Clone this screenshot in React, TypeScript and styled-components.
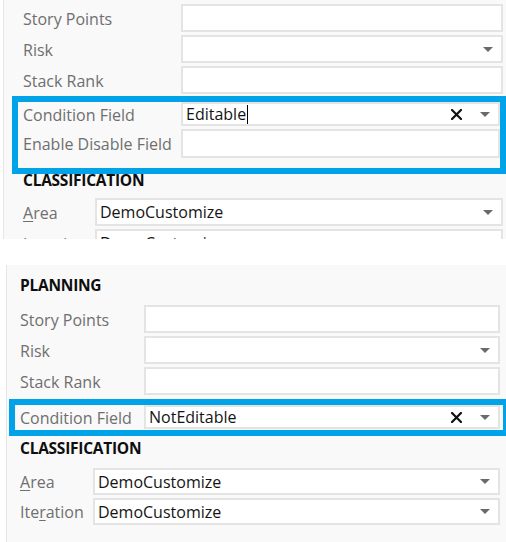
import React from "react";
import styled, { createGlobalStyle } from "styled-components";

const GlobalStyle = createGlobalStyle`
  html, body { margin: 0; padding: 0; background: #ffffff; }
  body { font-family: "Open Sans", "Noto Sans", sans-serif; }
  * { box-sizing: border-box; }
`;

const Page = styled.div`
  width: 506px;
  height: 542px;
  overflow: hidden;
  display: flex;
  flex-direction: column;
  gap: 26px;
`;

const Panel = styled.section<{
  $height: number;
  $offset: number;
  $padLeft: number;
  $padRight: number;
  $padTop: number;
}>`
  flex: none;
  height: ${(p) => p.$height}px;
  margin-left: ${(p) => p.$offset}px;
  border-left: 1px solid #e6e6e6;
  background: #f9f9f9;
  padding: ${(p) => p.$padTop}px ${(p) => p.$padRight}px 0 ${(p) => p.$padLeft}px;
  overflow: hidden;
  display: flex;
  flex-direction: column;
`;

const Group = styled.div`
  display: flex;
  flex-direction: column;
  gap: 3px;
  flex: none;
`;

const Row = styled.div<{ $labelWidth: number; $height: number }>`
  display: grid;
  grid-template-columns: ${(p) => p.$labelWidth}px 1fr;
  align-items: center;
  height: ${(p) => p.$height}px;
`;

const Label = styled.div`
  font-size: 16px;
  line-height: 20px;
  color: #6f6f6f;
  white-space: nowrap;
  padding-top: 1px;
`;

const Key = styled.span`
  text-decoration: underline;
  text-underline-offset: 2px;
  text-decoration-thickness: 1px;
`;

const Field = styled.div`
  height: 100%;
  min-width: 0;
  background: #ffffff;
  border: 2px solid #e4e4e4;
  display: flex;
  align-items: center;
  padding: 0 8px 0 3px;
`;

const Value = styled.div`
  flex: 1;
  display: flex;
  align-items: center;
  font-size: 16px;
  line-height: 20px;
  color: #141414;
  white-space: nowrap;
`;

const Caret = styled.span`
  display: inline-block;
  width: 1px;
  height: 19px;
  background: #000000;
  margin-left: 1px;
`;

const Icons = styled.div`
  display: flex;
  align-items: center;
  gap: 18px;
`;

const Highlight = styled.div<{
  $margin: string;
  $padding: string;
}>`
  flex: none;
  border: 6px solid #00a2e8;
  margin: ${(p) => p.$margin};
  padding: ${(p) => p.$padding};
  display: flex;
  flex-direction: column;
  gap: 3px;
`;

const Title = styled.div<{ $mt: number; $mb: number }>`
  flex: none;
  font-size: 15.5px;
  font-weight: 700;
  line-height: 20px;
  color: #0e0e0e;
  letter-spacing: -0.25px;
  margin: ${(p) => p.$mt}px 0 ${(p) => p.$mb}px 0;
`;

const ArrowIcon = () => (
  <svg width="10" height="5" viewBox="0 0 10 5" aria-hidden="true">
    <polygon points="0,0 10,0 5,5" fill="#6a6a6a" />
  </svg>
);

const ClearIcon = () => (
  <svg width="11" height="11" viewBox="0 0 11 11" aria-hidden="true">
    <path d="M1 1 L10 10 M10 1 L1 10" stroke="#111111" strokeWidth="2.2" strokeLinecap="square" />
  </svg>
);

type FieldProps = {
  label: React.ReactNode;
  labelWidth: number;
  height: number;
  value?: React.ReactNode;
  dropdown?: boolean;
  clear?: boolean;
};

const FormField = ({ label, labelWidth, height, value, dropdown, clear }: FieldProps) => (
  <Row $labelWidth={labelWidth} $height={height}>
    <Label>{label}</Label>
    <Field>
      <Value>{value}</Value>
      {(dropdown || clear) && (
        <Icons>
          {clear && <ClearIcon />}
          {dropdown && <ArrowIcon />}
        </Icons>
      )}
    </Field>
  </Row>
);

const AreaLabel = () => (
  <>
    <Key>A</Key>rea
  </>
);

const IterationLabel = () => (
  <>
    Ite<Key>r</Key>ation
  </>
);

export default function App() {
  return (
    <>
      <GlobalStyle />
      <Page>
        <Panel $height={239} $offset={3} $padLeft={19} $padRight={3} $padTop={4}>
          <Group>
            <FormField label="Story Points" labelWidth={158} height={28} />
            <FormField label="Risk" labelWidth={158} height={28} dropdown />
            <FormField label="Stack Rank" labelWidth={158} height={28} />
          </Group>
          <Highlight $margin="2px -3px 0 -11px" $padding="0 0 10px 5px">
            <FormField
              label="Condition Field"
              labelWidth={158}
              height={24}
              value={
                <>
                  Editable
                  <Caret />
                </>
              }
              clear
              dropdown
            />
            <FormField label="Enable Disable Field" labelWidth={158} height={29} />
          </Highlight>
          <Title $mt={-4} $mb={8}>CLASSIFICATION</Title>
          <Group>
            <FormField label={<AreaLabel />} labelWidth={72} height={28} value="DemoCustomize" dropdown />
            <FormField label={<IterationLabel />} labelWidth={72} height={28} value="DemoCustomize" dropdown />
          </Group>
        </Panel>

        <Panel $height={277} $offset={6} $padLeft={13} $padRight={6} $padTop={10}>
          <Title $mt={0} $mb={10}>PLANNING</Title>
          <Group>
            <FormField label="Story Points" labelWidth={124} height={28} />
            <FormField label="Risk" labelWidth={124} height={28} dropdown />
            <FormField label="Stack Rank" labelWidth={124} height={28} />
          </Group>
          <Highlight $margin="4px -9px 0 -11px" $padding="0 3px 3px 5px">
            <FormField
              label="Condition Field"
              labelWidth={124}
              height={22}
              value="NotEditable"
              clear
              dropdown
            />
          </Highlight>
          <Title $mt={2} $mb={10}>CLASSIFICATION</Title>
          <Group>
            <FormField label={<AreaLabel />} labelWidth={73} height={27} value="DemoCustomize" dropdown />
            <FormField label={<IterationLabel />} labelWidth={73} height={27} value="DemoCustomize" dropdown />
          </Group>
        </Panel>
      </Page>
    </>
  );
}
